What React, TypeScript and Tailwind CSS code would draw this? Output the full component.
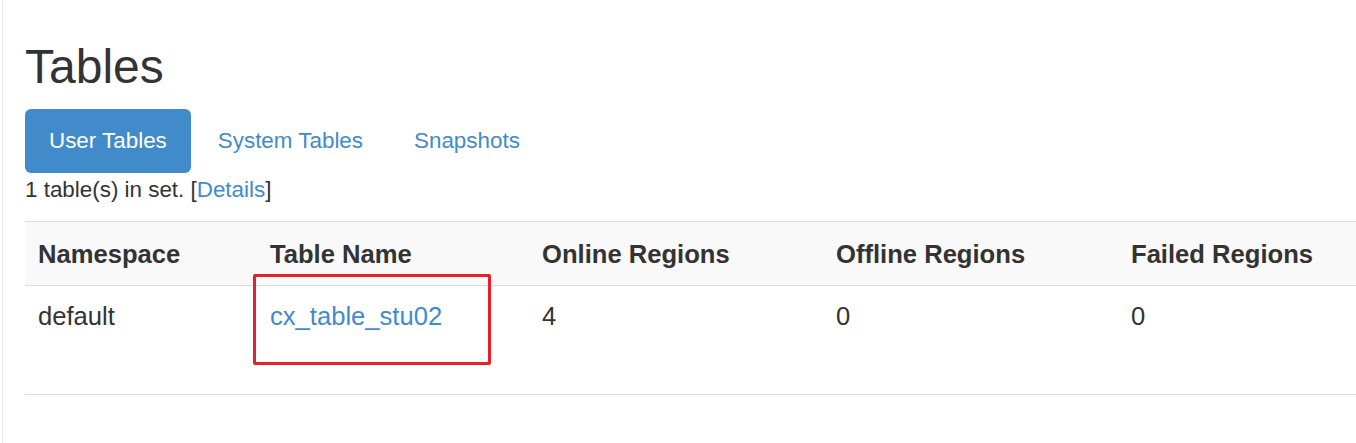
export default function App() {
  const cols = "grid grid-cols-[232px_272px_294px_295px_1fr]";
  return (
    <div
      className="h-[443px] w-[1356px] overflow-hidden bg-white text-[#333333]"
      style={{ fontFamily: '"Liberation Sans", Arial, Helvetica, sans-serif' }}
    >
      <div className="ml-[2px] h-[443px] border-l border-[#e6e6e6] pl-[22px] pt-[41px]">
        <h1 className="text-[48px] leading-[52px] font-normal text-[#333333]">Tables</h1>

        <div className="mt-[16px] flex gap-[3px]">
          <div className="h-[64px] rounded-[6px] bg-[#428bca] px-[24px] py-[16px] text-[22.4px] leading-[32px] text-white">
            User Tables
          </div>
          <div className="h-[64px] rounded-[6px] px-[24px] py-[16px] text-[22.4px] leading-[32px] text-[#428bca]">
            System Tables
          </div>
          <div className="h-[64px] rounded-[6px] px-[24px] py-[16px] text-[22.4px] leading-[32px] text-[#428bca]">
            Snapshots
          </div>
        </div>

        <p className="mt-[1px] text-[22.4px] leading-[32px]">
          1 table(s) in set. [<span className="text-[#428bca]">Details</span>]
        </p>

        <div className="relative mt-[15px] text-[25.6px] leading-[36px]">
          <div className={`${cols} h-[65px] items-center border-y border-[#dddddd] bg-[#f9f9f9] font-bold`}>
            <div className="px-[13px]">Namespace</div>
            <div className="px-[13px]">Table Name</div>
            <div className="px-[13px]">Online Regions</div>
            <div className="px-[13px]">Offline Regions</div>
            <div className="whitespace-nowrap px-[13px]">Failed Regions</div>
          </div>
          <div className={`${cols} h-[109px] items-start border-b border-[#dddddd] pt-[12px]`}>
            <div className="px-[13px]">default</div>
            <div className="px-[13px] text-[#428bca]">cx_table_stu02</div>
            <div className="px-[13px]">4</div>
            <div className="px-[13px]">0</div>
            <div className="px-[13px]">0</div>
          </div>
          <div className="absolute left-[228px] top-[53px] h-[91px] w-[238px] rounded-[2px] border-[3px] border-[#e8202a]" />
        </div>
      </div>
    </div>
  );
}
